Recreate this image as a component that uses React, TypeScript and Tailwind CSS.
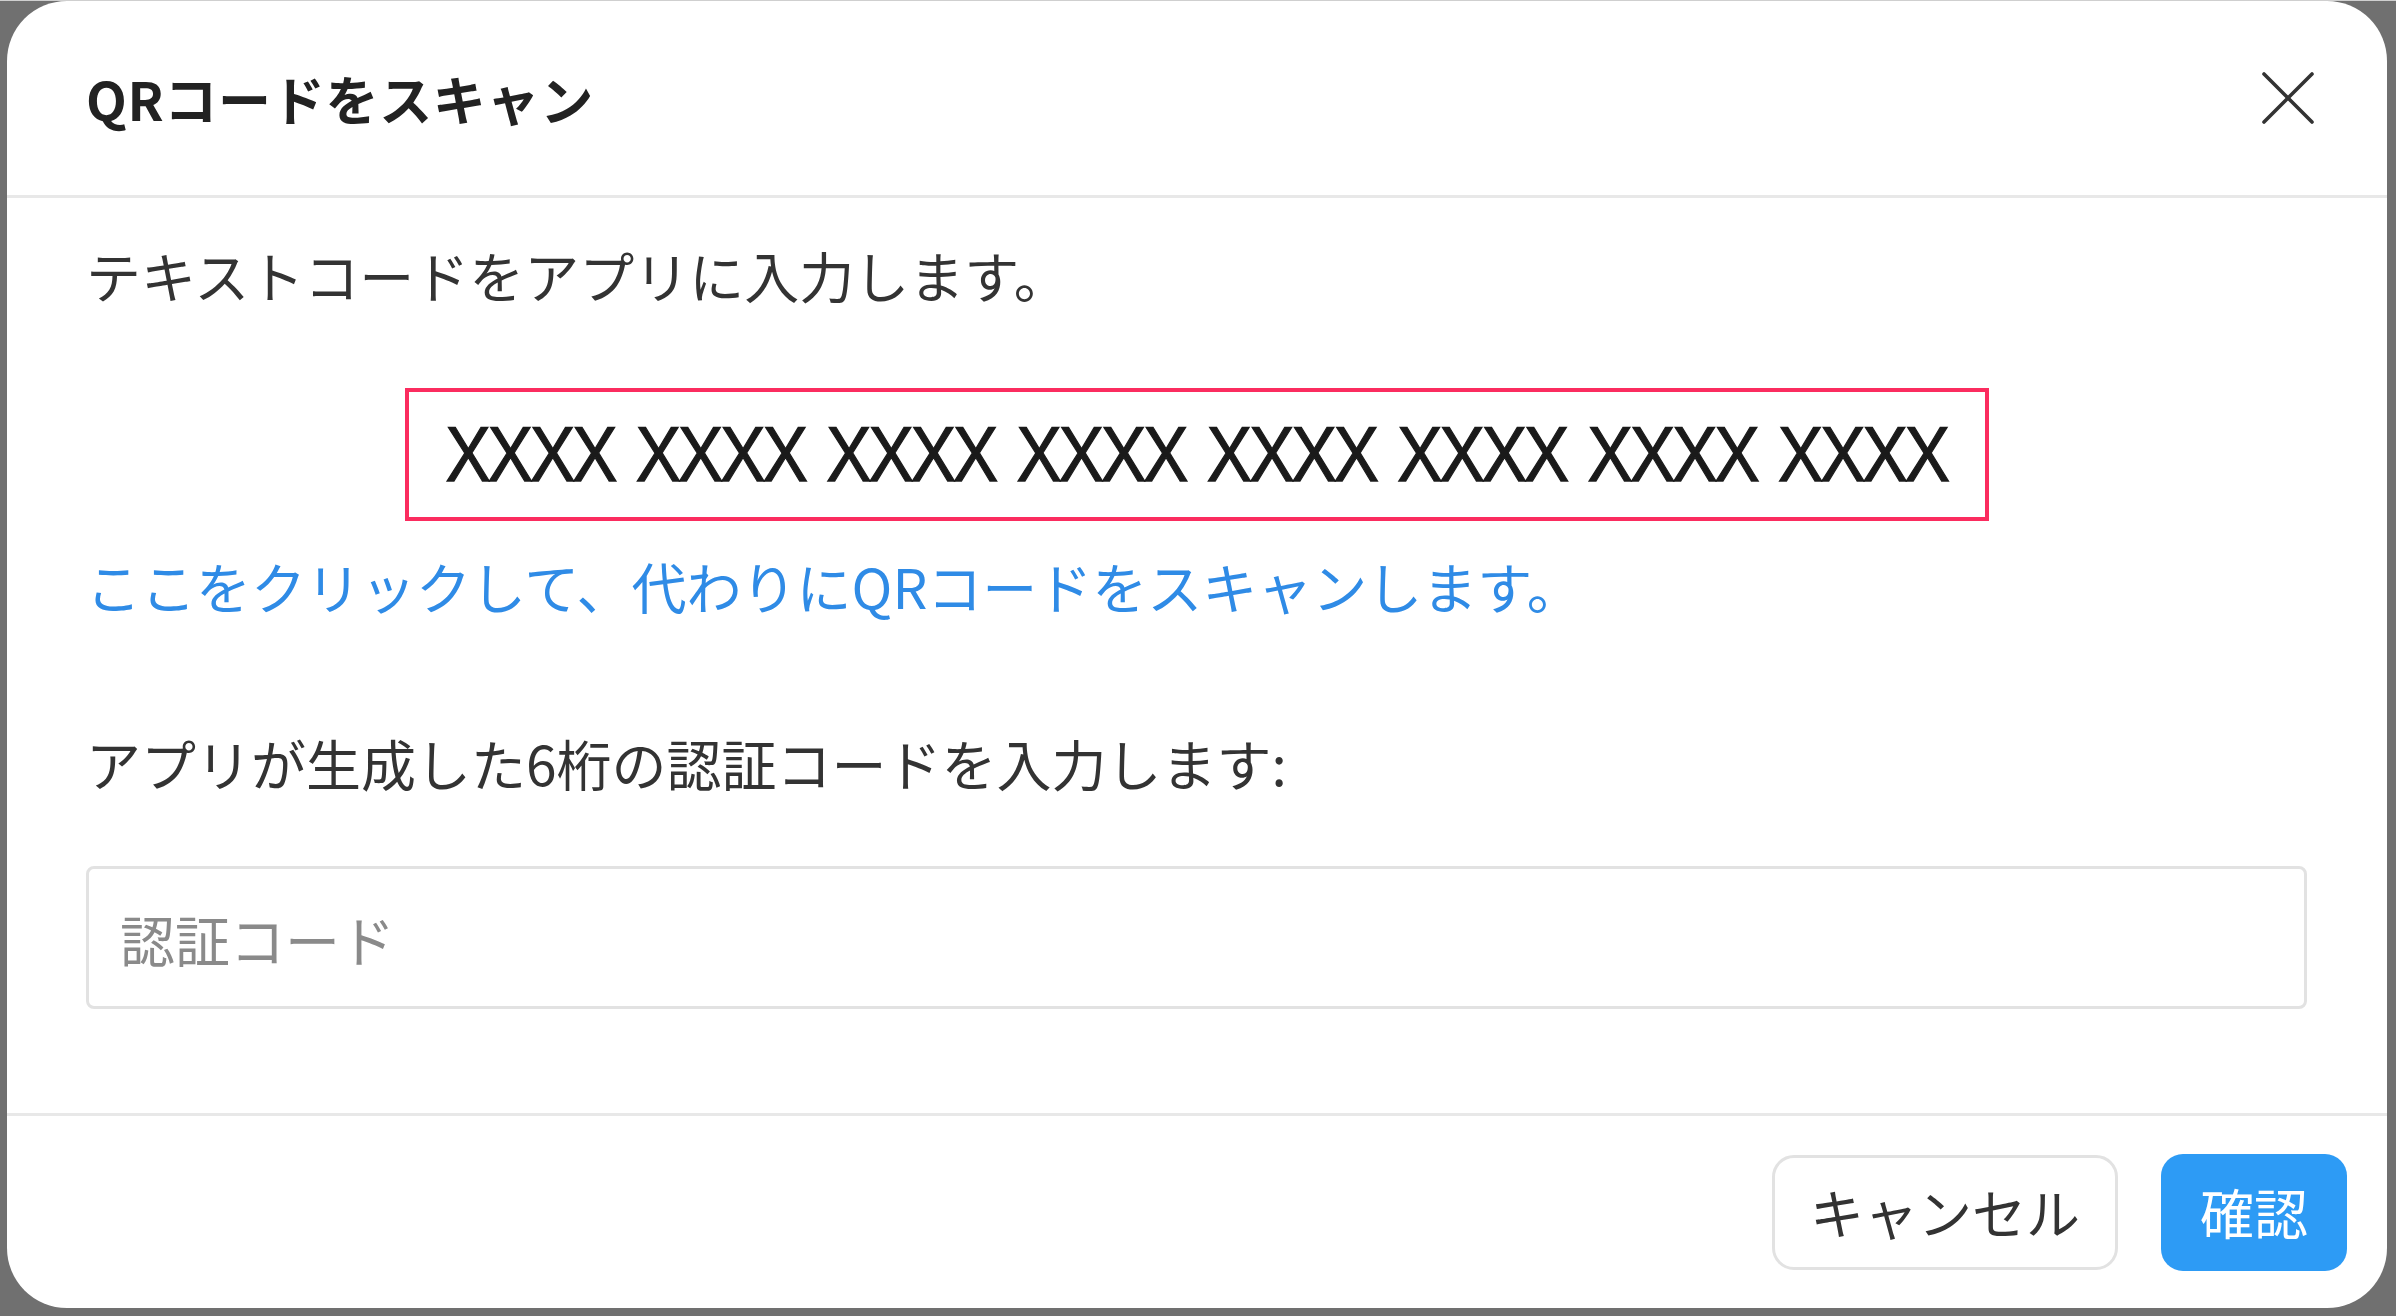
import React from "react";

export default function App() {
  const jp = { fontFamily: '"Noto Sans CJK JP", "Noto Sans", sans-serif' } as React.CSSProperties;
  return (
    <div className="w-[2396px] h-[1316px] bg-[#707070] border-t border-[#cfcfcf] overflow-hidden" style={jp}>
      <div className="ml-[7px] w-[2380px] h-[1307px] bg-white rounded-[60px] flex flex-col overflow-hidden">
        {/* Header */}
        <div className="h-[194px] shrink-0 flex items-center justify-between pl-[79px] pr-[72px] border-b-[3px] border-[#e8e8e8] box-content">
          <div className="text-[53px] leading-[80px] font-semibold text-[#222] tracking-[0.7px]">QRコードをスキャン</div>
          <button className="w-[54px] h-[54px] flex items-center justify-center">
            <svg width="54" height="54" viewBox="0 0 54 54" fill="none">
              <line x1="3" y1="3" x2="51" y2="51" stroke="#333" strokeWidth="3.6" strokeLinecap="round" />
              <line x1="51" y1="3" x2="3" y2="51" stroke="#333" strokeWidth="3.6" strokeLinecap="round" />
            </svg>
          </button>
        </div>

        {/* Body */}
        <div className="flex flex-col pl-[79px] pr-[80px] pt-[36px] pb-[104px] border-b-[3px] border-[#e8e8e8]">
          <div className="text-[55px] leading-[80px] text-[#333]">テキストコードをアプリに入力します。</div>
          <div className="mt-[74px] mx-auto w-[1584px] h-[133px] border-4 border-[#fb2c5f] flex items-center justify-center">
            <span
              className="inline-block text-[77px] leading-none text-[#1a1a1a] tracking-[-3.3px] [word-spacing:6px] scale-x-[0.88] whitespace-nowrap [-webkit-text-stroke:1.3px_#1a1a1a]"
              style={{ fontFamily: '"Liberation Sans", Arial, sans-serif' }}
            >
              XXXX XXXX XXXX XXXX XXXX XXXX XXXX XXXX
            </span>
          </div>
          <div className="mt-[24px] text-[55px] leading-[80px] text-[#2f8be6]">
            ここをクリックして、代わりにQRコードをスキャンします。
          </div>
          <div className="mt-[97px] text-[55px] leading-[80px] text-[#333]">
            アプリが生成した6桁の認証コードを入力します:
          </div>
          <div className="mt-[64px] h-[143px] border-[3px] border-[#e2e2e2] rounded-[8px] flex items-center pl-[31px]">
            <span className="text-[55px] leading-[80px] text-[#8a8a8a]">認証コード</span>
          </div>
        </div>

        {/* Footer */}
        <div className="flex-1 flex items-center justify-end pr-[40px] gap-[43px]">
          <button className="w-[346px] h-[115px] border-[3px] border-[#e2e2e2] rounded-[22px] bg-white flex items-center justify-center text-[54px] leading-none text-[#333]" style={jp}>
            キャンセル
          </button>
          <button className="w-[186px] h-[117px] rounded-[22px] bg-[#2d9bf5] flex items-center justify-center text-[54px] leading-none text-white" style={jp}>
            確認
          </button>
        </div>
      </div>
    </div>
  );
}
